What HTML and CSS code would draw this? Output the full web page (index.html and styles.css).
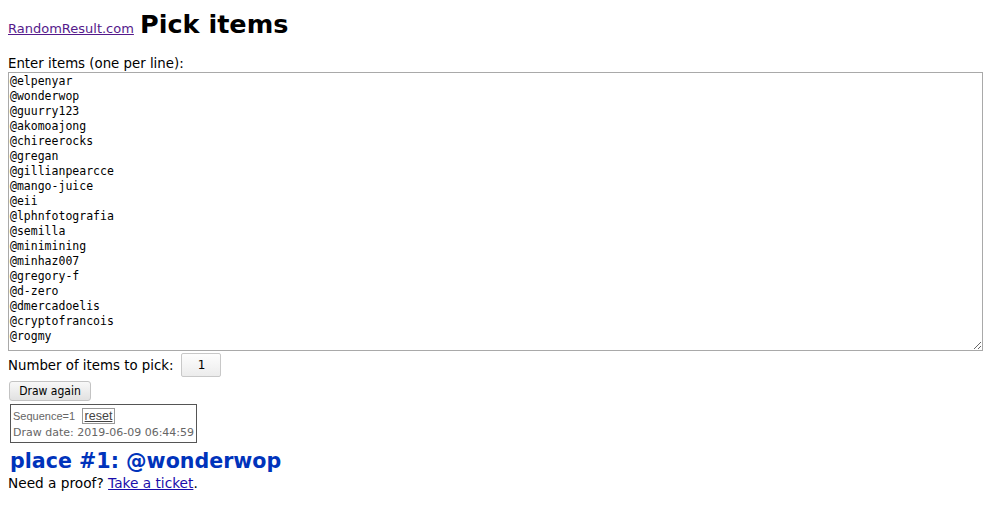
FILE: index.html
```html
<!DOCTYPE html>
<html lang="en">
<head>
    <meta charset="UTF-8">
    <title>Pick items - RandomResult.com</title>
    <link rel="stylesheet" href="styles.css">
</head>
<body>
    <div class="title"><a href="#" class="site">RandomResult.com</a> <h1>Pick items</h1></div>

    <form class="picker">
        <label for="items" class="lbl">Enter items (one per line):</label>
        <textarea id="items" class="items">@elpenyar
@wonderwop
@guurry123
@akomoajong
@chireerocks
@gregan
@gillianpearcce
@mango-juice
@eii
@lphnfotografia
@semilla
@minimining
@minhaz007
@gregory-f
@d-zero
@dmercadoelis
@cryptofrancois
@rogmy</textarea>

        <div class="count-row">
            <span>Number of items to pick:</span>
            <input type="text" class="count" value="1">
        </div>

        <button type="button" class="draw">Draw again</button>
    </form>

    <div class="info">
        <div><span class="seq">Sequence=1</span> <span class="reset">reset</span></div>
        <div>Draw date: 2019-06-09 06:44:59</div>
    </div>

    <h2 class="result">place #1: @wonderwop</h2>
    <p class="proof">Need a proof? <a href="#">Take a ticket</a>.</p>
</body>
</html>
```

FILE: styles.css
```css
body {
    margin: 8px;
    font-family: "DejaVu Sans", Verdana, sans-serif;
    font-size: 13.33px;
    color: #000;
    background: #fff;
}

a {
    color: #1a0dab;
}

.title {
    font-size: 13px;
    line-height: 32px;
    height: 32px;
}

.title h1 {
    display: inline;
    margin: 0 0 0 2px;
    font-size: 25.5px;
    font-weight: bold;
}

.site {
    color: #551a8b;
}

.picker {
    margin: 16px 0 0;
}

.lbl {
    display: block;
    line-height: 16px;
}

.items {
    display: block;
    box-sizing: border-box;
    width: 975px;
    height: 279px;
    margin: 0;
    padding: 1px 1px;
    border: 1px solid #a9a9a9;
    font-family: "DejaVu Sans Mono", monospace;
    font-size: 11.5px;
    line-height: 15px;
    color: #000;
    resize: both;
}

.count-row {
    display: flex;
    align-items: center;
    gap: 8px;
    margin-top: 2px;
}

.count {
    box-sizing: border-box;
    width: 40px;
    height: 24px;
    margin: 0;
    border: 1px solid #c8c8c8;
    border-radius: 2px;
    background: linear-gradient(#fdfdfd, #ececec);
    text-align: center;
    font-family: "DejaVu Sans", sans-serif;
    font-size: 12px;
}

.draw {
    display: block;
    margin: 4px 0 0 1px;
    height: 20px;
    width: 82px;
    padding: 0;
    border: 1px solid #c3c3c3;
    border-radius: 3px;
    background: linear-gradient(#f8f8f8, #e1e1e1);
    font-family: "DejaVu Sans", sans-serif;
    font-stretch: condensed;
    font-size: 12px;
    color: #000;
}

.info {
    display: inline-block;
    margin: 3px 0 0 2px;
    padding: 3px 2px 1px 2px;
    border: 1px solid #555;
    font-size: 11px;
    line-height: 16px;
    color: #666;
}

.seq {
    font-family: "Liberation Sans", Arial, sans-serif;
}

.reset {
    display: inline-block;
    margin-left: 3px;
    padding: 0 2px;
    border: 1px solid #999;
    line-height: 14px;
    font-family: "Liberation Sans", Arial, sans-serif;
    font-size: 12.5px;
    color: #444;
    text-decoration: underline;
}

.result {
    margin: 6px 0 0 2px;
    font-size: 20.6px;
    line-height: 24px;
    color: #0033bb;
}

.proof {
    margin: 0;
    font-size: 13.7px;
    line-height: 20px;
}
```
